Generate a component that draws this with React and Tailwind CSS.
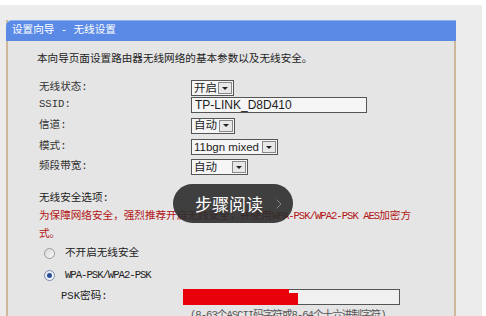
import { ChevronRight } from "lucide-react";

const cjk = { fontFamily: '"Liberation Mono", "Noto Sans CJK SC", monospace' };

function Select({ text, width, textWidth }) {
  return (
    <div
      className="flex h-[16px] items-stretch border border-[#555] bg-[#f6f6f6]"
      style={{ width }}
    >
      <span
        className="flex items-center whitespace-nowrap pl-[2px] text-[11.5px] leading-none text-[#222]"
        style={{ width: textWidth, fontFamily: '"Liberation Sans", "Noto Sans CJK SC", sans-serif' }}
      >
        {text}
      </span>
      <span className="m-[1px] ml-auto flex w-[14px] items-center justify-center border border-[#888] bg-[#e8e8e8]">
        <span className="h-0 w-0 border-x-[3px] border-t-[3px] border-x-transparent border-t-[#222]" />
      </span>
    </div>
  );
}

function Row({ label, h, children }) {
  return (
    <div className="flex items-center" style={{ height: h }}>
      <span className="w-[152px] text-[10.6px] text-[#333]">{label}</span>
      {children}
    </div>
  );
}

export default function App() {
  return (
    <div
      className="relative h-[316px] w-[486px] overflow-hidden bg-white"
      style={cjk}
    >
      <div className="mr-[4px] mt-[5px] h-[311px] bg-[#ececec] pl-[6px] pt-[15px]">
        <div className="h-[300px] w-[450px] border-r-2 border-l-2 border-[#cdb89c] bg-[#e5e5e5]">
          <div className="-ml-[2px] -mr-[2px] flex h-[21px] items-center rounded-tl-[6px] border-t border-[#8fb0ef] bg-[#5a8ae6] pl-[6px] text-[10.6px] text-white">
            设置向导 - 无线设置
          </div>

          <div className="pl-[29px] pt-[11px] text-[10.6px] text-[#222]">
            本向导页面设置路由器无线网络的基本参数以及无线安全。
          </div>

          <div className="mt-[12px] pl-[31px]">
            <Row label="无线状态:" h={17}>
              <Select text="开启" width={43} textWidth={26} />
            </Row>
            <Row label="SSID:" h={17}>
              <div
                className="flex h-[16px] w-[176px] items-center border border-[#555] bg-[#f6f6f6] pl-[3px] text-[12px] leading-none text-[#222]"
                style={{ fontFamily: '"Liberation Sans", sans-serif' }}
              >
                TP-LINK_D8D410
              </div>
            </Row>
            <Row label="信道:" h={24}>
              <Select text="自动" width={44} textWidth={26} />
            </Row>
            <Row label="模式:" h={19}>
              <Select text="11bgn mixed" width={87} textWidth={68} />
            </Row>
            <Row label="频段带宽:" h={21}>
              <Select text="自动" width={57} textWidth={40} />
            </Row>
          </div>

          <div className="mt-[11px] pl-[31px] text-[10.6px] leading-[18px] text-[#222]">
            无线安全选项:
          </div>
          <div className="w-[418px] pl-[31px] text-[10.6px] leading-[18px] text-[#b31414]">
            为保障网络安全，强烈推荐开启无线安全，并使用
            <span className="tracking-[-1px]">WPA-PSK/WPA2-PSK AES</span>
            加密方式。
          </div>

          <div className="mt-[1px] flex h-[20px] items-center pl-[36px] text-[10.6px] text-[#222]">
            <span className="mr-[10px] h-[11px] w-[11px] rounded-full border border-[#9a9a9a] bg-gradient-to-br from-[#d6d6d6] to-[#fafafa]" />
            不开启无线安全
          </div>
          <div className="mt-[2px] flex h-[20px] items-center pl-[36px] text-[10.6px] text-[#222]">
            <span className="mr-[10px] flex h-[11px] w-[11px] items-center justify-center rounded-full border border-[#7a8aa8] bg-gradient-to-br from-[#dfe4ee] to-white">
              <span className="h-[5px] w-[5px] rounded-full bg-[#2a4f9a]" />
            </span>
            <span className="tracking-[-1px]">WPA-PSK/WPA2-PSK</span>
          </div>
          <div className="mt-[1px] flex h-[20px] items-center pl-[53px] text-[10.6px] text-[#222]">
            <span className="w-[122px]">PSK密码:</span>
            <div className="relative h-[16px] w-[217px] border border-[#555] bg-[#f0f0f0]">
              <div className="absolute left-[-1px] top-[-1px] h-[10px] w-[106px] bg-[#e8000a]" />
              <div className="absolute left-[-1px] top-[3px] h-[12px] w-[115px] bg-[#e8000a]" />
            </div>
          </div>
          <div className="whitespace-nowrap pl-[182px] pt-[1px] text-[10.6px] leading-[14px] tracking-[-1px] text-[#555]">
            (8-63个ASCII码字符或8-64个十六进制字符)
          </div>
        </div>
      </div>

      <div className="absolute left-[173px] top-[184px] flex h-[39px] w-[120px] items-center rounded-full bg-[#2c2c2c]/90 pl-[22px]">
        <span
          className="text-[17px] leading-none text-white"
          style={{ fontFamily: '"Noto Sans CJK SC", sans-serif' }}
        >
          步骤阅读
        </span>
        <ChevronRight size={16} strokeWidth={1.2} className="ml-[8px] text-[#9a9a9a]" />
      </div>
    </div>
  );
}
